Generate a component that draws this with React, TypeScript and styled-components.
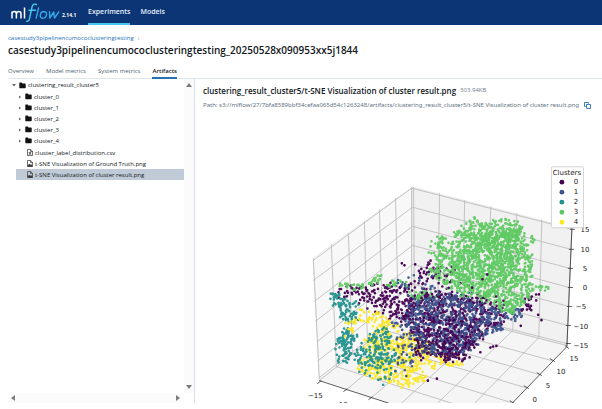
import React from "react";
import styled, { createGlobalStyle } from "styled-components";

const GlobalStyle = createGlobalStyle`
  *, *::before, *::after { box-sizing: border-box; }
  body { margin: 0; background: #fff; color: #11171c; font-family: "Open Sans", "Noto Sans", sans-serif; font-size: 6px; }
  button { font: inherit; color: inherit; background: none; border: 0; padding: 0; cursor: pointer; }
  a { text-decoration: none; }
`;

const Page = styled.div`
  display: flex;
  flex-direction: column;
  height: 100vh;
  padding-bottom: 6px;
  overflow: hidden;
`;

const TopBar = styled.header`
  display: flex;
  flex: none;
  height: 25px;
  padding-left: 11px;
  background: #0b3574;
  color: #fff;
`;

const Brand = styled.a`
  display: flex;
  align-items: center;
  width: 77px;
  color: #fff;
`;

const Version = styled.span`
  padding: 5px 0 0 1px;
  font-size: 5px;
  font-weight: 700;
`;

const NavLink = styled.a<{ $active?: boolean }>`
  display: flex;
  align-items: center;
  height: 25px;
  margin-right: 10px;
  border-bottom: 2px solid ${(p) => (p.$active ? "#43c9ed" : "transparent")};
  color: #e7f1fb;
  font-size: 7px;
  font-weight: 600;
`;

const RunHeader = styled.section`
  flex: none;
  padding: 8px 8px 0;
`;

const Crumb = styled.nav`
  display: flex;
  gap: 4px;
  height: 10px;
  line-height: 10px;
  color: #6b7c8c;
`;

const CrumbLink = styled.a`
  color: #2272b4;
`;

const RunTitle = styled.h1`
  margin: 0;
  font-size: 10px;
  line-height: 14px;
  font-weight: 600;
`;

const Tabs = styled.div`
  display: flex;
  flex: none;
  gap: 12px;
  height: 14px;
  margin: 8px 0 0 8px;
  border-bottom: 1px solid #e0e6ee;
`;

const Tab = styled.button<{ $active?: boolean }>`
  height: 14px;
  border-bottom: 2px solid ${(p) => (p.$active ? "#2272b4" : "transparent")};
  color: ${(p) => (p.$active ? "#11171c" : "#4f6271")};
  font-weight: ${(p) => (p.$active ? 600 : 400)};
`;

const Body = styled.main`
  display: flex;
  flex: 1;
  min-height: 0;
  padding-left: 8px;
`;

const Sidebar = styled.aside`
  display: grid;
  flex: none;
  grid-template: 1fr 10px / 1fr 10px;
  width: 187px;
  border-right: 1px solid #d9e2ec;
`;

const Tree = styled.ul`
  margin: 0;
  padding: 0 0 0 2px;
  list-style: none;
`;

const Branch = styled.ul`
  margin: 0 0 1px;
  padding: 0 0 0 6px;
  list-style: none;
`;

const TreeRow = styled.button<{ $selected?: boolean }>`
  display: flex;
  align-items: center;
  gap: 2px;
  width: 100%;
  height: 11px;
  padding-left: 1px;
  background: ${(p) => (p.$selected ? "#c0cbd7" : "transparent")};
  white-space: nowrap;
`;

const RootRow = styled(TreeRow)`
  height: 12px;
`;

const FileRow = styled(TreeRow)`
  padding-left: 11px;
`;

const Scrollbar = styled.div<{ $horizontal?: boolean }>`
  display: flex;
  flex-direction: ${(p) => (p.$horizontal ? "row" : "column")};
  align-items: center;
  justify-content: space-between;
  padding: ${(p) => (p.$horizontal ? "0 3px 0 2px" : "3px 0")};
  background: #fbfbfb;
`;

const ScrollButton = styled.button`
  display: flex;
`;

const Preview = styled.section`
  display: flex;
  flex: 1;
  flex-direction: column;
  min-width: 0;
  overflow: hidden;
`;

const PreviewHeader = styled.header`
  flex: none;
  padding: 4px 0 0 8px;
  white-space: nowrap;
`;

const PreviewTitle = styled.h2`
  display: flex;
  align-items: center;
  gap: 4px;
  height: 14px;
  margin: 0;
  font-size: 8px;
  font-weight: 600;
`;

const FileSize = styled.span`
  color: #6b7c8c;
  font-size: 6px;
  font-weight: 400;
`;

const PathLine = styled.div`
  display: flex;
  align-items: center;
  gap: 5px;
  height: 16px;
  color: #5f7281;
  font-family: "Noto Sans", sans-serif;
`;

const CopyButton = styled.button`
  display: flex;
`;

const Figure = styled.figure`
  flex: 1;
  min-height: 0;
  margin: 0;
  overflow: hidden;

  svg { display: block; width: 100%; height: auto; }
`;

const Logo = () => (
  <svg width="50" height="22" viewBox="0 0 50 22" fill="none" strokeLinecap="round" strokeLinejoin="round" role="img" aria-label="mlflow">
    <g stroke="#fff" strokeWidth="1.5" strokeLinecap="butt">
      <path d="M1 16.5V9.5M1 11.5Q1.5 9.6 3.5 9.6Q5.4 9.6 5.4 12V16.5M5.4 12Q5.7 9.6 7.8 9.6Q10 9.6 10 12V16.5" />
      <path d="M13.5 5.5V16.5" />
    </g>
    <g stroke="#35a8e8" strokeWidth="1.4">
      <path d="M25.5 2.5Q22 1 21 5L18.7 16Q18 20 15.5 19.2M18 8.3H24.5" stroke="#43c9ed" />
      <path d="M27.6 6L25.2 16.2" />
      <path d="M33 9.5Q29.9 9.5 29.3 13Q28.9 16 31.5 16.2Q34.8 16.2 35.5 12.8Q35.9 9.8 33 9.5Z" />
      <path d="M38.5 9.8L38.8 16L42.8 10L43.5 16L47.8 9.8" />
    </g>
  </svg>
);

const Arrow = ({ dir }: { dir: "up" | "down" | "left" | "right" }) => {
  const shapes = { up: "M0 5L3 1L6 5Z", down: "M0 1L3 5L6 1Z", left: "M5 0L1 3L5 6Z", right: "M1 0L5 3L1 6Z" };
  return (
    <svg width="6" height="6" viewBox="0 0 6 6"><path d={shapes[dir]} fill="#7c7c7c" /></svg>
  );
};

const Caret = ({ open }: { open?: boolean }) => (
  <svg width="6" height="6" viewBox="0 0 6 6"><path d={open ? "M1 2H5L3 4.5Z" : "M2 1.5L4 3L2 4.5Z"} fill="#666" /></svg>
);

const FolderIcon = () => (
  <svg width="7" height="7" viewBox="0 0 7 7"><path d="M.3 1.2Q.3.6.9.6H2.7L3.5 1.5H6Q6.7 1.5 6.7 2.2V5.5Q6.7 6.2 6 6.2H.9Q.3 6.2.3 5.5Z" fill="#111" /></svg>
);

const FileIcon = ({ image }: { image?: boolean }) => (
  <svg width="6" height="7" viewBox="0 0 6 7" fill="none" stroke="#333" strokeWidth=".7">
    <path d="M.5 6.5V.5H3.7L5.5 2.3V6.5ZM3.5.5V2.5H5.5" />
    {image ? <path d="M.8 6.3L2.2 4L3.3 5.2L4.1 4.4L5.3 6.3Z" fill="#333" /> : <path d="M1.6 3.7H4.3M1.6 5H4.3M3 3.2V5.5" />}
  </svg>
);

const CopyIcon = () => (
  <svg width="7" height="7" viewBox="0 0 7 7" fill="none" stroke="#2272b4" strokeWidth=".9">
    <path d="M2.5 2.5H6.5V6.5H2.5ZM1.7 4.5H.5V.5H4.5V1.7" />
  </svg>
);

type Point = [number, number];
type Patch = { color: string; count: number; area: Point[] };

const COLORS = ["#440154", "#3b528b", "#21918c", "#5ec962", "#fde725"];
const [PURPLE, BLUE, TEAL, GREEN, YELLOW] = COLORS;

const PATCHES: Patch[] = [
  { color: PURPLE, count: 185, area: [[80, 245], [140, 230], [240, 245], [285, 285], [260, 345], [190, 340], [130, 305], [95, 280]] },
  { color: PURPLE, count: 14, area: [[40, 245], [90, 240], [90, 280], [45, 275]] },
  { color: PURPLE, count: 75, area: [[220, 230], [325, 165], [440, 220], [430, 270], [300, 290], [230, 270]] },
  { color: BLUE, count: 35, area: [[215, 220], [320, 195], [350, 275], [260, 285]] },
  { color: GREEN, count: 20, area: [[45, 242], [70, 234], [120, 234], [125, 246], [50, 248]] },
  { color: GREEN, count: 20, area: [[125, 232], [165, 208], [175, 216], [145, 238]] },
  { color: GREEN, count: 14, area: [[155, 240], [240, 215], [250, 240], [185, 245]] },
  { color: GREEN, count: 28, area: [[255, 265], [310, 250], [330, 280], [270, 285]] },
  { color: TEAL, count: 18, area: [[15, 290], [35, 250], [45, 280], [30, 300]] },
  { color: TEAL, count: 66, area: [[38, 295], [55, 280], [95, 285], [100, 340], [75, 355], [45, 330]] },
  { color: TEAL, count: 100, area: [[50, 375], [80, 370], [95, 390], [85, 440], [60, 475], [40, 465], [38, 410]] },
  { color: YELLOW, count: 60, area: [[85, 330], [115, 300], [140, 315], [205, 345], [180, 370], [110, 350], [70, 390], [45, 420], [60, 370]] },
  { color: YELLOW, count: 520, area: [[120, 400], [190, 345], [240, 380], [310, 395], [325, 430], [285, 500], [310, 515], [240, 550], [165, 525], [100, 490], [125, 440]] },
  { color: YELLOW, count: 55, area: [[280, 405], [350, 440], [430, 465], [415, 485], [335, 475], [330, 500], [300, 470]] },
  { color: TEAL, count: 165, area: [[85, 460], [120, 405], [150, 370], [200, 365], [195, 420], [220, 455], [180, 490], [120, 485]] },
  { color: TEAL, count: 20, area: [[100, 490], [180, 480], [265, 450], [200, 530], [150, 540]] },
  { color: BLUE, count: 70, area: [[200, 350], [250, 330], [330, 420], [300, 465], [220, 420], [190, 390]] },
  { color: BLUE, count: 18, area: [[220, 440], [280, 450], [250, 510], [215, 495]] },
  { color: PURPLE, count: 560, area: [[250, 290], [310, 260], [460, 270], [540, 305], [550, 340], [480, 390], [440, 425], [420, 470], [370, 470], [290, 435], [270, 400], [240, 350]] },
  { color: BLUE, count: 600, area: [[250, 290], [350, 270], [430, 260], [490, 300], [535, 320], [540, 370], [470, 395], [430, 435], [415, 450], [300, 440], [245, 350]] },
  { color: PURPLE, count: 130, area: [[290, 320], [360, 330], [470, 360], [430, 450], [380, 475], [330, 445]] },
  { color: BLUE, count: 28, area: [[535, 320], [595, 305], [595, 340], [540, 345]] },
  { color: PURPLE, count: 22, area: [[590, 310], [610, 270], [645, 265], [640, 290], [600, 325]] },
  { color: PURPLE, count: 18, area: [[270, 400], [310, 400], [300, 465], [265, 460]] },
  { color: GREEN, count: 1020, area: [[310, 205], [335, 160], [312, 130], [325, 100], [350, 95], [370, 115], [440, 85], [540, 75], [590, 75], [610, 120], [628, 180], [620, 225], [640, 250], [590, 300], [555, 310], [500, 295], [450, 270], [410, 268], [360, 240]] },
  { color: GREEN, count: 240, area: [[385, 88], [445, 40], [500, 46], [530, 36], [585, 58], [600, 100], [540, 130], [470, 110]] },
  { color: GREEN, count: 300, area: [[380, 170], [480, 85], [570, 80], [585, 200], [550, 270], [420, 260]] },
  { color: GREEN, count: 45, area: [[510, 290], [610, 285], [560, 330], [535, 320]] },
  { color: GREEN, count: 12, area: [[635, 246], [675, 244], [675, 252], [640, 254]] },
  { color: GREEN, count: 7, area: [[618, 97], [636, 92], [636, 108], [622, 108]] },
  { color: PURPLE, count: 14, area: [[330, 190], [480, 200], [560, 260], [540, 320], [350, 265]] },
];

const OUTLIERS: Point[] = [[232, 174], [240, 180], [272, 177], [318, 166], [497, 426], [505, 423], [515, 421], [467, 440], [588, 361], [640, 328], [650, 344], [310, 525], [337, 519], [449, 426]];

const inside = (x: number, y: number, area: Point[]) => {
  let hit = false;
  for (let i = 0, j = area.length - 1; i < area.length; j = i++) {
    const [xi, yi] = area[i];
    const [xj, yj] = area[j];
    if (yi > y !== yj > y && x < ((xj - xi) * (y - yi)) / (yj - yi) + xi) hit = !hit;
  }
  return hit;
};

let seed = 20250528;
const random = () => {
  seed = (seed * 1664525 + 1013904223) % 4294967296;
  return seed / 4294967296;
};

const dot = (x: number, y: number) => `M${x.toFixed(1)} ${y.toFixed(1)}h0`;

const scatter = ({ area, count }: Patch) => {
  const xs = area.map((p) => p[0]);
  const ys = area.map((p) => p[1]);
  const left = Math.min(...xs);
  const top = Math.min(...ys);
  const width = Math.max(...xs) - left;
  const height = Math.max(...ys) - top;
  let path = "";
  let placed = 0;
  while (placed < count) {
    const x = left + random() * width;
    const y = top + random() * height;
    if (inside(x, y, area)) {
      path += dot(x + (random() - 0.5) * 16, y + (random() - 0.5) * 16);
      placed++;
    }
  }
  return path;
};

const MARKS = PATCHES.map((p) => ({ color: p.color, path: scatter(p) }));

const GRID = [
  "M332 244L337 366L498 417", "M349 233L353 353L512 402", "M365 221L368 341L526 387", "M380 209L383 329L540 374",
  "M396 198L399 318L552 360", "M414 187L415 306L567 345", "M314 258L320 379", "M412 187L412 307L320 380",
  "M440 193L438 312L346 390", "M465 200L463 318L371 398", "M491 206L488 324L397 407", "M517 213L513 330L424 416",
  "M542 219L539 337L452 426", "M572 228L567 345",
  "M314 260L412 188L572 229", "M314 280L413 207L571 249", "M315 301L413 226L570 268", "M316 321L413 245L569 287",
  "M318 341L413 264L569 306", "M319 360L414 284L568 325", "M320 377L414 304L567 343",
];

const AXES = "M572 228L567 346L482 434M320 380L397 405";
const TICKS = "M570 229h5M569 249h5M568 268h5M568 287h5M567 306h5M566 325h5M566 343h5M565 345l4 3M550 358l5 3M537 372l5 3M524 385l5 3M510 400l5 3M322 380l-4 3M348 388l-4 3M373 396l-4 3";
const Z_LABELS: [string, number][] = [["15", 232], ["10", 252], ["5", 271], ["0", 290], ["−5", 309], ["−10", 328], ["−15", 347]];
const FLOOR_LABELS: [string, number, number][] = [["15", 574, 360], ["10", 561, 373], ["5", 548, 387], ["0", 535, 401], ["−15", 316, 397], ["−10", 341, 406]];

const TsnePlot = () => (
  <svg viewBox="196 113 406 290" role="img" aria-label="t-SNE Visualization of cluster result">
    <path d="M314 258L413 187L414 306L320 379Z" fill="#f8f8f8" stroke="#ececec" />
    <path d="M413 187L572 228L567 345L414 306Z" fill="#f1f1f1" stroke="#e6e6e6" />
    <path d="M320 379L414 306L567 345L482 434Z" fill="#f5f5f5" />
    <path d={GRID.join("")} fill="none" stroke="#b8b8b8" strokeWidth=".8" />
    <path d={AXES} fill="none" stroke="#333" strokeWidth=".8" />
    <path d={TICKS} fill="none" stroke="#333" strokeWidth=".8" />
    <g transform="translate(325 205) scale(.3333)" fill="none" strokeWidth="8" strokeLinecap="round">
      {MARKS.map((m, i) => <path key={i} d={m.path} stroke={m.color} strokeOpacity=".95" />)}
      <path d={OUTLIERS.map(([x, y]) => dot(x, y)).join("")} stroke={PURPLE} />
    </g>
    <g fontFamily="DejaVu Sans, sans-serif" fontSize="7" fill="#222" textAnchor="middle">
      {Z_LABELS.map(([label, y]) => <text key={label} x={label.startsWith("−") ? 581 : 585} y={y}>{label}</text>)}
      {FLOOR_LABELS.map(([label, x, y]) => <text key={label} x={x} y={y}>{label}</text>)}
      <rect x="551.5" y="166.5" width="32" height="61" rx="1.5" fill="#fff" fillOpacity=".9" stroke="#d4d4d4" />
      <text x="567" y="175">Clusters</text>
      {COLORS.map((color, i) => (
        <g key={color}>
          <circle cx="562" cy={182 + i * 10} r="2.4" fill={color} />
          <text x="576" y={184 + i * 10}>{i}</text>
        </g>
      ))}
    </g>
  </svg>
);

const FOLDERS = ["cluster_0", "cluster_1", "cluster_2", "cluster_3", "cluster_4"];
const FILES = ["cluster_label_distribution.csv", "t-SNE Visualization of Ground Truth.png", "t-SNE Visualization of cluster result.png"];
const TABS = ["Overview", "Model metrics", "System metrics", "Artifacts"];

export default function App() {
  return (
    <Page>
      <GlobalStyle />
      <TopBar>
        <Brand href="#"><Logo /><Version>2.14.1</Version></Brand>
        <NavLink href="#experiments" $active>Experiments</NavLink>
        <NavLink href="#models">Models</NavLink>
      </TopBar>
      <RunHeader>
        <Crumb aria-label="Breadcrumb">
          <CrumbLink href="#experiment">casestudy3pipelinencumococlusteringtesting</CrumbLink>
          <span>›</span>
        </Crumb>
        <RunTitle>casestudy3pipelinencumococlusteringtesting_20250528x090953xx5j1844</RunTitle>
      </RunHeader>
      <Tabs role="tablist">
        {TABS.map((tab) => (
          <Tab key={tab} role="tab" aria-selected={tab === "Artifacts"} $active={tab === "Artifacts"}>{tab}</Tab>
        ))}
      </Tabs>
      <Body>
        <Sidebar>
          <Tree>
            <li>
              <RootRow><Caret open /><FolderIcon />clustering_result_cluster5</RootRow>
              <Branch>
                {FOLDERS.map((name) => (
                  <li key={name}><TreeRow><Caret /><FolderIcon />{name}</TreeRow></li>
                ))}
              </Branch>
              <Branch>
                {FILES.map((name, i) => (
                  <li key={name}><FileRow $selected={i === 2}><FileIcon image={i > 0} />{name}</FileRow></li>
                ))}
              </Branch>
            </li>
          </Tree>
          <Scrollbar>
            <ScrollButton aria-label="Scroll up"><Arrow dir="up" /></ScrollButton>
            <ScrollButton aria-label="Scroll down"><Arrow dir="down" /></ScrollButton>
          </Scrollbar>
          <Scrollbar $horizontal>
            <ScrollButton aria-label="Scroll left"><Arrow dir="left" /></ScrollButton>
            <ScrollButton aria-label="Scroll right"><Arrow dir="right" /></ScrollButton>
          </Scrollbar>
        </Sidebar>
        <Preview>
          <PreviewHeader>
            <PreviewTitle>clustering_result_cluster5/t-SNE Visualization of cluster result.png<FileSize>303.94KB</FileSize></PreviewTitle>
            <PathLine>
              <span>Path: s3://mlflow/27/7bfa8589bbf34cefaa065d54c1263248/artifacts/clustering_result_cluster5/t-SNE Visualization of cluster result.png</span>
              <CopyButton aria-label="Copy path"><CopyIcon /></CopyButton>
            </PathLine>
          </PreviewHeader>
          <Figure><TsnePlot /></Figure>
        </Preview>
      </Body>
    </Page>
  );
}
